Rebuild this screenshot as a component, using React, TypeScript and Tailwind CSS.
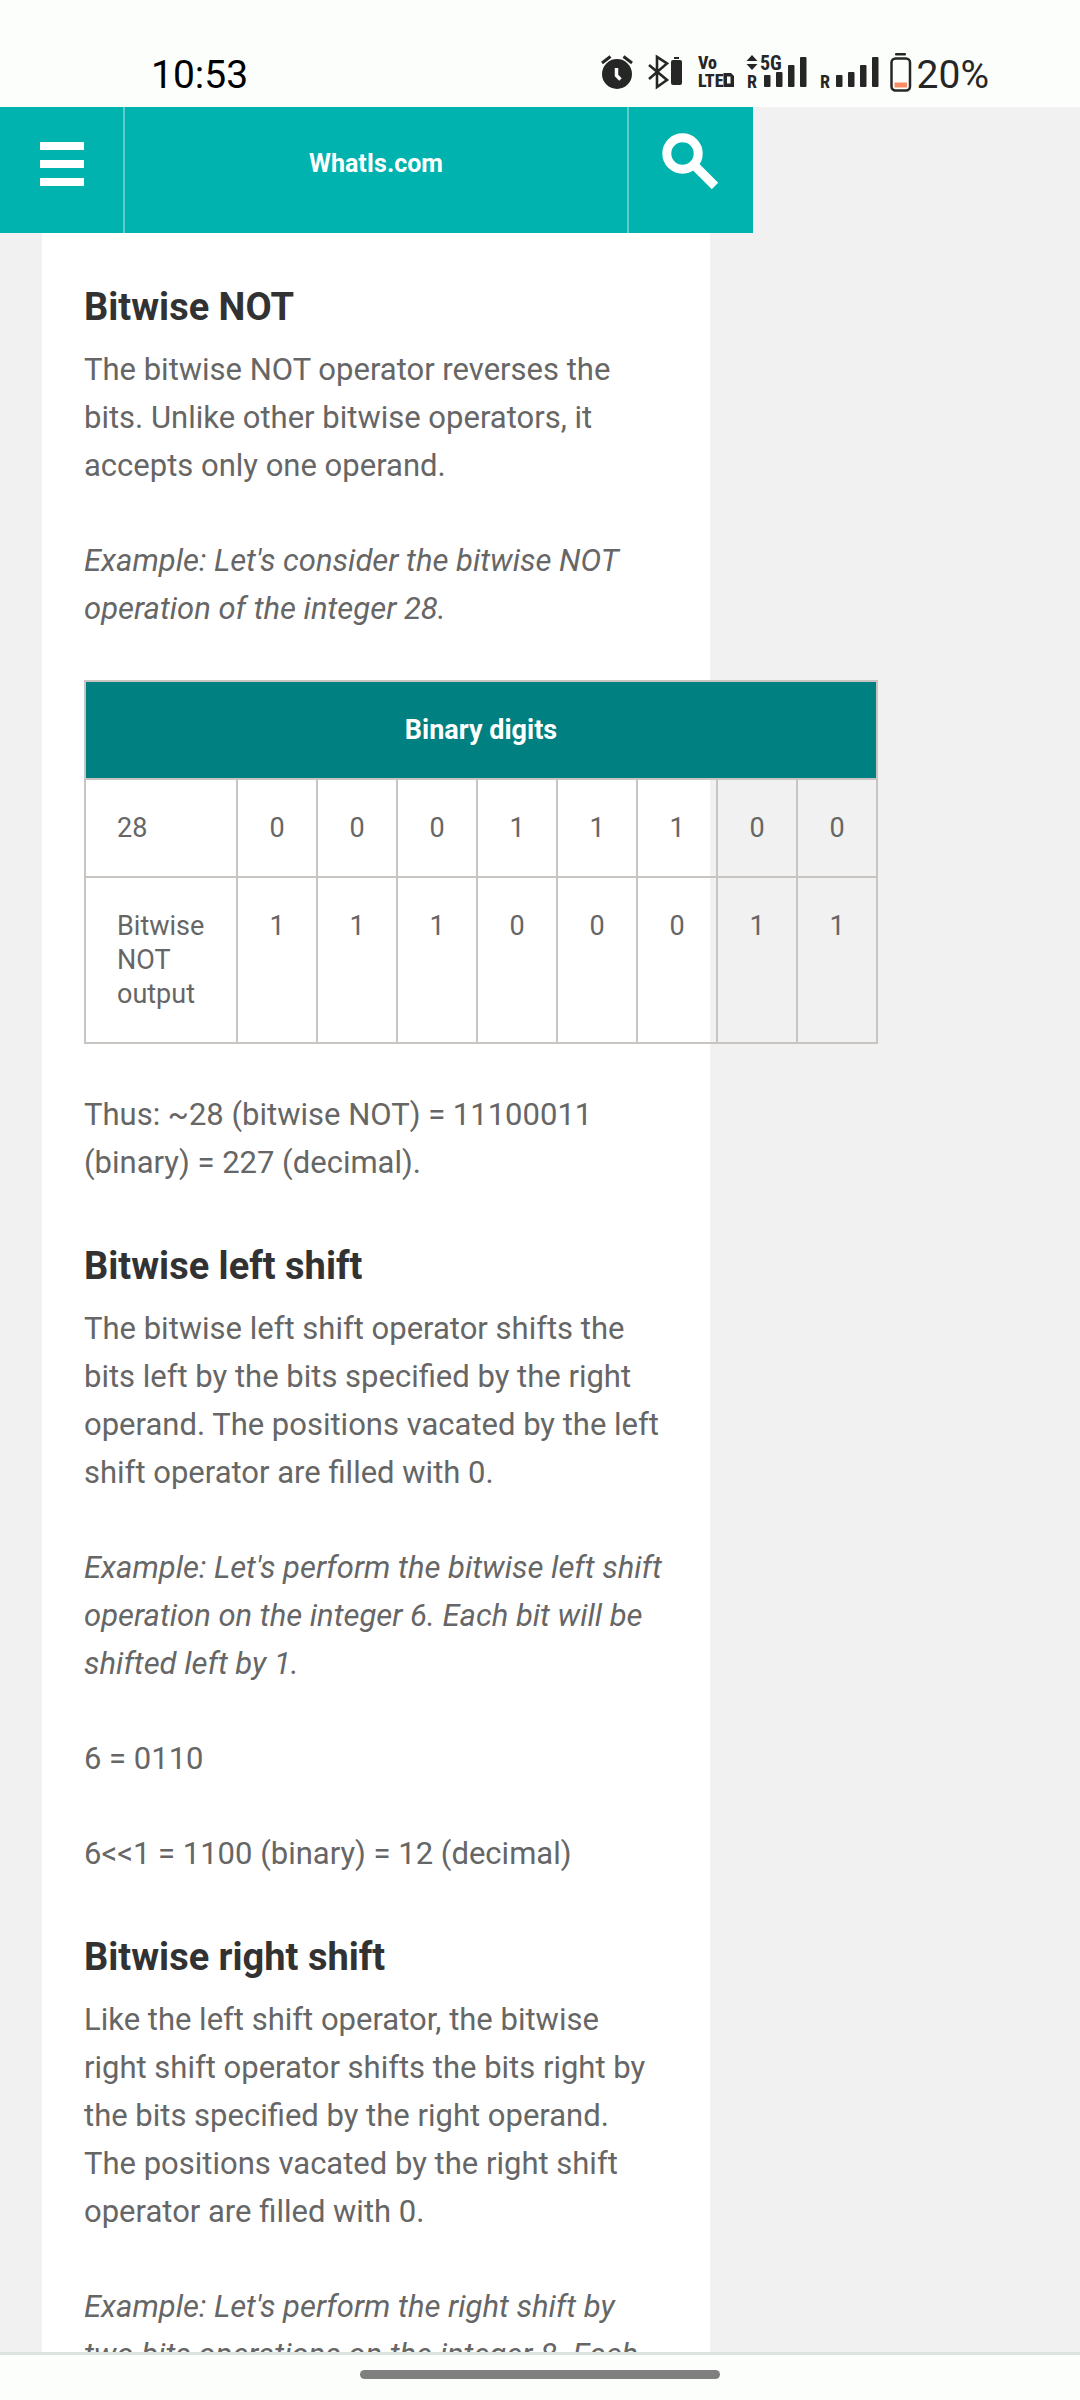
import React from "react";

const INK = "#262626";

function AlarmIcon() {
  return (
    <svg width="36" height="42" viewBox="0 0 36 42" fill="none" aria-label="Alarm">
      <circle cx="17" cy="22" r="15" fill={INK} />
      <path d="M2 11L10.500 4.500M23.500 4.500L32 11" stroke={INK} strokeWidth="3" />
      <path d="M16.500 16V23.500L20.500 27.500" stroke="#fcfefb" strokeWidth="3.500" />
    </svg>
  );
}

function BluetoothIcon() {
  return (
    <svg width="40" height="42" viewBox="0 0 40 42" fill="none" aria-label="Bluetooth">
      <path d="M3 13L21 28L11 35V5L21 11.500L3 27" stroke={INK} strokeWidth="2.600" />
      <rect x="25" y="8" width="11" height="25" rx="2" fill={INK} />
      <rect x="28" y="5" width="5" height="2" fill={INK} />
    </svg>
  );
}

const narrow = '"Roboto Condensed", "Liberation Sans Narrow", Roboto, sans-serif';

function VolteIcon() {
  return (
    <svg width="40" height="42" viewBox="0 0 40 42" fill={INK} aria-label="VoLTE">
      <g fontFamily={narrow} fontWeight="800">
        <text x="2" y="17" fontSize="18">Vo</text>
        <text x="2" y="35" fontSize="18">LTE</text>
      </g>
      <path fillRule="evenodd" d="M27.500 21H35L38 24V35H27.500ZM31 24.500V31.500H34.500V24.500Z" />
    </svg>
  );
}

function SignalBars({ x }: { x: number }) {
  return (
    <g fill={INK}>
      <rect x={x} y="23" width="6.500" height="12" rx="1" />
      <rect x={x + 12} y="20" width="6.500" height="15" rx="1" />
      <rect x={x + 24} y="13" width="6.500" height="22" rx="1" />
      <rect x={x + 36} y="5" width="6.500" height="30" rx="1" />
    </g>
  );
}

function Signal5GIcon() {
  return (
    <svg width="64" height="42" viewBox="0 0 64 42" fill={INK} aria-label="5G signal">
      <path d="M6 3L11.500 9H0.500ZM0.500 12H11.500L6 18Z" />
      <g fontFamily={narrow} fontWeight="700">
        <text x="14" y="18" fontSize="20">5G</text>
        <text x="1" y="36" fontSize="18">R</text>
      </g>
      <SignalBars x={18} />
    </svg>
  );
}

function SignalRoamingIcon() {
  return (
    <svg width="60" height="42" viewBox="0 0 60 42" fill={INK} aria-label="Signal">
      <text x="0" y="36" fontFamily={narrow} fontWeight="700" fontSize="18">R</text>
      <SignalBars x={16} />
    </svg>
  );
}

function BatteryIcon() {
  return (
    <svg width="22" height="42" viewBox="0 0 22 42" fill="none" aria-label="Battery">
      <rect x="1.500" y="6.500" width="18.500" height="32" rx="4" stroke={INK} strokeWidth="2.500" />
      <rect x="5" y="1" width="11" height="2.500" rx="1" fill={INK} />
      <rect x="4.500" y="30.500" width="12.500" height="5" fill="#fa8b67" />
    </svg>
  );
}

function StatusBar() {
  return (
    <div className="flex h-[107px] shrink-0 items-start justify-between bg-[#fcfefb] pt-[52px] pr-[91px] pl-[151px]">
      <time className="text-[39px] leading-[46px] text-black">10:53</time>
      <div className="flex items-start gap-[10px]">
        <AlarmIcon />
        <BluetoothIcon />
        <VolteIcon />
        <Signal5GIcon />
        <SignalRoamingIcon />
        <div className="flex items-start gap-[5px]">
          <BatteryIcon />
          <span className="text-[39px] leading-[46px] text-[#262626]">20%</span>
        </div>
      </div>
    </div>
  );
}

function SiteHeader() {
  return (
    <header className="flex h-[126px] w-full max-w-[753px] shrink-0 bg-[#00b3ae] text-white">
      <button
        type="button"
        aria-label="Menu"
        className="flex w-[125px] flex-col items-center justify-center gap-[10px] border-r-2 border-white/35 pb-3"
      >
        <span className="h-2 w-11 bg-white" />
        <span className="h-2 w-11 bg-white" />
        <span className="h-2 w-11 bg-white" />
      </button>
      <a href="#" className="flex flex-1 items-center justify-center pb-3 text-[25px] leading-8 font-bold">
        WhatIs.com
      </a>
      <button
        type="button"
        aria-label="Search"
        className="flex w-[126px] items-center justify-center border-l-2 border-white/35 pb-[18px]"
      >
        <svg width="58" height="56" viewBox="0 0 58 56" fill="none" stroke="#fff">
          <circle cx="20.500" cy="20.500" r="15.700" strokeWidth="9" />
          <path d="M31 31L53 53" strokeWidth="9" />
        </svg>
      </button>
    </header>
  );
}

function Heading({ children }: { children: React.ReactNode }) {
  return <h3 className="mb-[17px] text-[38px] leading-[44px] font-bold text-[#323232]">{children}</h3>;
}

const rows = [
  { label: "28", bits: [0, 0, 0, 1, 1, 1, 0, 0] },
  { label: "Bitwise NOT output", bits: [1, 1, 1, 0, 0, 0, 1, 1] },
];

function BitsTable() {
  return (
    <table className="w-[794px] table-fixed border-collapse text-[27px] leading-[34px]">
      <colgroup>
        <col className="w-[152px]" />
        <col span={8} />
      </colgroup>
      <thead>
        <tr>
          <th colSpan={9} className="border-2 border-[#c8c4c2] bg-[#008080] p-[31px] text-center font-bold text-white">
            Binary digits
          </th>
        </tr>
      </thead>
      <tbody>
        {rows.map((row) => (
          <tr key={row.label}>
            <th scope="row" className="border-2 border-[#c8c4c2] py-[31px] pr-5 pl-[31px] text-left align-top font-normal">
              {row.label}
            </th>
            {row.bits.map((bit, i) => (
              <td key={i} className="border-2 border-[#c8c4c2] py-[31px] text-center align-top">
                {bit}
              </td>
            ))}
          </tr>
        ))}
      </tbody>
    </table>
  );
}

export default function App() {
  return (
    <div className="flex h-screen flex-col overflow-hidden bg-[#f1f1f1] font-[Roboto,sans-serif]">
      <StatusBar />
      <SiteHeader />
      <main className="min-h-0 w-full max-w-[753px] flex-1 pr-[43px] pl-[42px]">
        <article className="h-full bg-white pt-[52px] pr-[45px] pl-[42px] text-[31px] leading-[48px] text-[#666666]">
          <section className="mb-[57px]">
            <Heading>Bitwise NOT</Heading>
            <div className="flex flex-col gap-[47px]">
              <p>The bitwise NOT operator reverses the bits. Unlike other bitwise operators, it accepts only one operand.</p>
              <p className="italic">Example: Let's consider the bitwise NOT operation of the integer 28.</p>
              <BitsTable />
              <p>Thus: ~28 (bitwise NOT) = 11100011 (binary) = 227 (decimal).</p>
            </div>
          </section>
          <section className="mb-[57px]">
            <Heading>Bitwise left shift</Heading>
            <div className="flex flex-col gap-[47px]">
              <p>
                The bitwise left shift operator shifts the bits left by the bits specified by the right operand. The
                positions vacated by the left shift operator are filled with 0.
              </p>
              <p className="italic">
                Example: Let's perform the bitwise left shift operation on the integer 6. Each bit will be shifted left
                by 1.
              </p>
              <p>6 = 0110</p>
              <p>6&lt;&lt;1 = 1100 (binary) = 12 (decimal)</p>
            </div>
          </section>
          <section>
            <Heading>Bitwise right shift</Heading>
            <div className="flex flex-col gap-[47px]">
              <p>
                Like the left shift operator, the bitwise right shift operator shifts the bits right by the bits
                specified by the right operand. The positions vacated by the right shift operator are filled with 0.
              </p>
              <p className="italic">Example: Let's perform the right shift by two bits operations on the integer 8. Each</p>
            </div>
          </section>
        </article>
      </main>
      <footer className="flex h-12 shrink-0 justify-center border-t-3 border-[#dce4e1] bg-[#fcfefb] pt-[15px]">
        <span className="h-[9px] w-1/3 rounded-full bg-[#7f7f7f]" />
      </footer>
    </div>
  );
}
